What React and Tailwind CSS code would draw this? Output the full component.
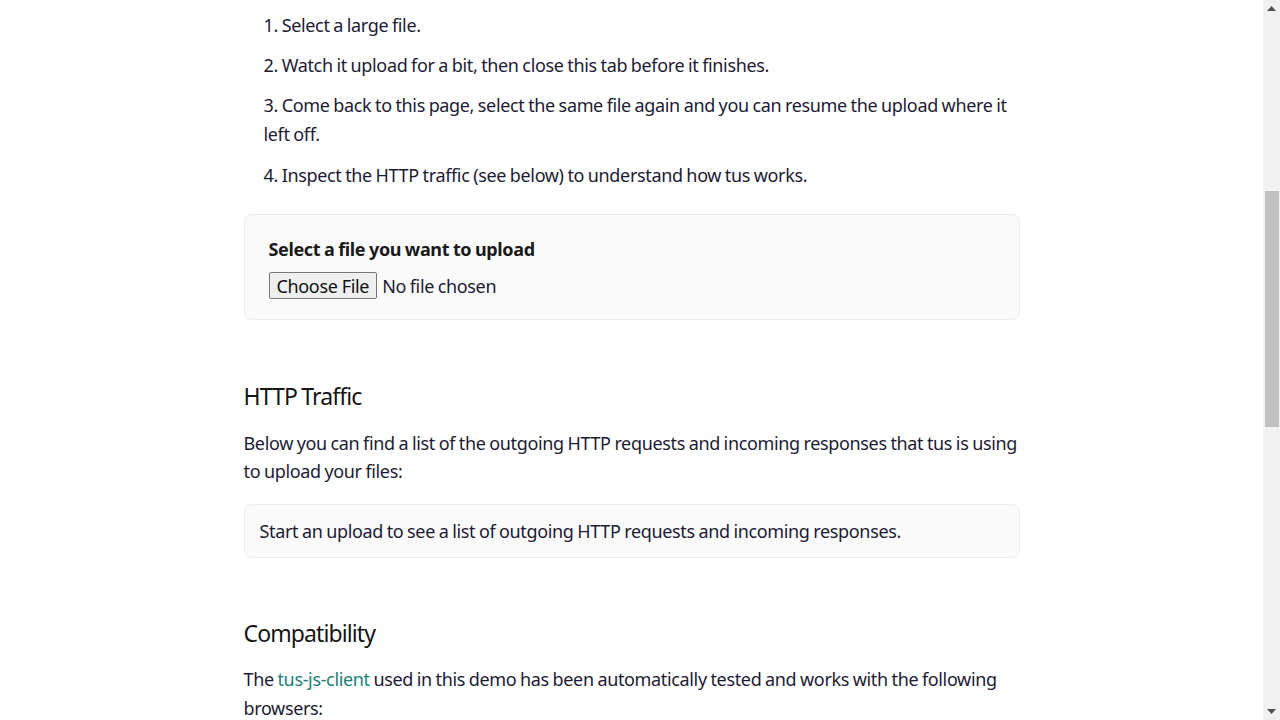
import React from "react";

const font = { fontFamily: '"Noto Sans", "Open Sans", Arial, sans-serif' };

function Item({ n, children }) {
  return (
    <p className="pl-5 mb-[11.6px] leading-[28.8px]">
      {n}. {children}
    </p>
  );
}

export default function App() {
  return (
    <div className="flex h-[720px] w-full overflow-hidden bg-white" style={font}>
      <main className="flex-1 min-w-0">
        <div className="mx-auto w-[776px] pt-[10.6px] text-[18px] tracking-[-0.35px] [word-spacing:-0.6px] text-[#1d1b33]">
          <Item n={1}>Select a large file.</Item>
          <Item n={2}>Watch it upload for a bit, then close this tab before it finishes.</Item>
          <Item n={3}>
            Come back to this page, select the same file again and you can resume the upload where it left off.
          </Item>
          <Item n={4}>Inspect the HTTP traffic (see below) to understand how tus works.</Item>

          <div className="mt-[25px] h-[106px] rounded-lg border border-[#ececec] bg-[#fafafa] px-6 pt-[20px]">
            <div className="font-bold leading-[28px] text-[#1a1a1a]">Select a file you want to upload</div>
            <div className="mt-[9px] flex items-center">
              <button className="h-[27px] rounded-[2px] border border-[#767676] bg-[#efefef] px-[7px] leading-none text-[#111]">
                Choose File
              </button>
              <span className="ml-[5px] leading-none text-[#1d1b33]">No file chosen</span>
            </div>
          </div>

          <h2 className="mt-[60px] text-[23px] leading-[32px] tracking-[-0.9px] text-[#151515]">HTTP Traffic</h2>
          <p className="mt-[17px] leading-[28px]">
            Below you can find a list of the outgoing HTTP requests and incoming responses that tus is using to upload your files:
          </p>
          <div className="mt-[19px] rounded-lg border border-[#ececec] bg-[#fafafa] px-[15px] py-[12px] leading-[28px]">
            Start an upload to see a list of outgoing HTTP requests and incoming responses.
          </div>

          <h2 className="mt-[59px] text-[23px] leading-[32px] tracking-[-0.9px] text-[#151515]">Compatibility</h2>
          <p className="mt-[16px] leading-[29px]">
            The <a className="text-[#1b7f79]" href="#">tus-js-client</a> used in this demo has been automatically tested and works with the following browsers:
          </p>
        </div>
      </main>
      <aside className="flex w-[17px] shrink-0 flex-col items-center bg-[#f1f1f1]">
        <div className="flex h-[17px] w-full items-center justify-center">
          <svg width="9" height="5" viewBox="0 0 9 5"><path d="M4.5 0 L9 5 L0 5 Z" fill="#505050" /></svg>
        </div>
        <div className="mt-[174px] h-[236px] w-[14px] rounded-none bg-[#c1c1c1]"></div>
        <div className="flex-1"></div>
        <div className="flex h-[17px] w-full items-center justify-center">
          <svg width="9" height="5" viewBox="0 0 9 5"><path d="M0 0 L9 0 L4.5 5 Z" fill="#505050" /></svg>
        </div>
      </aside>
    </div>
  );
}
